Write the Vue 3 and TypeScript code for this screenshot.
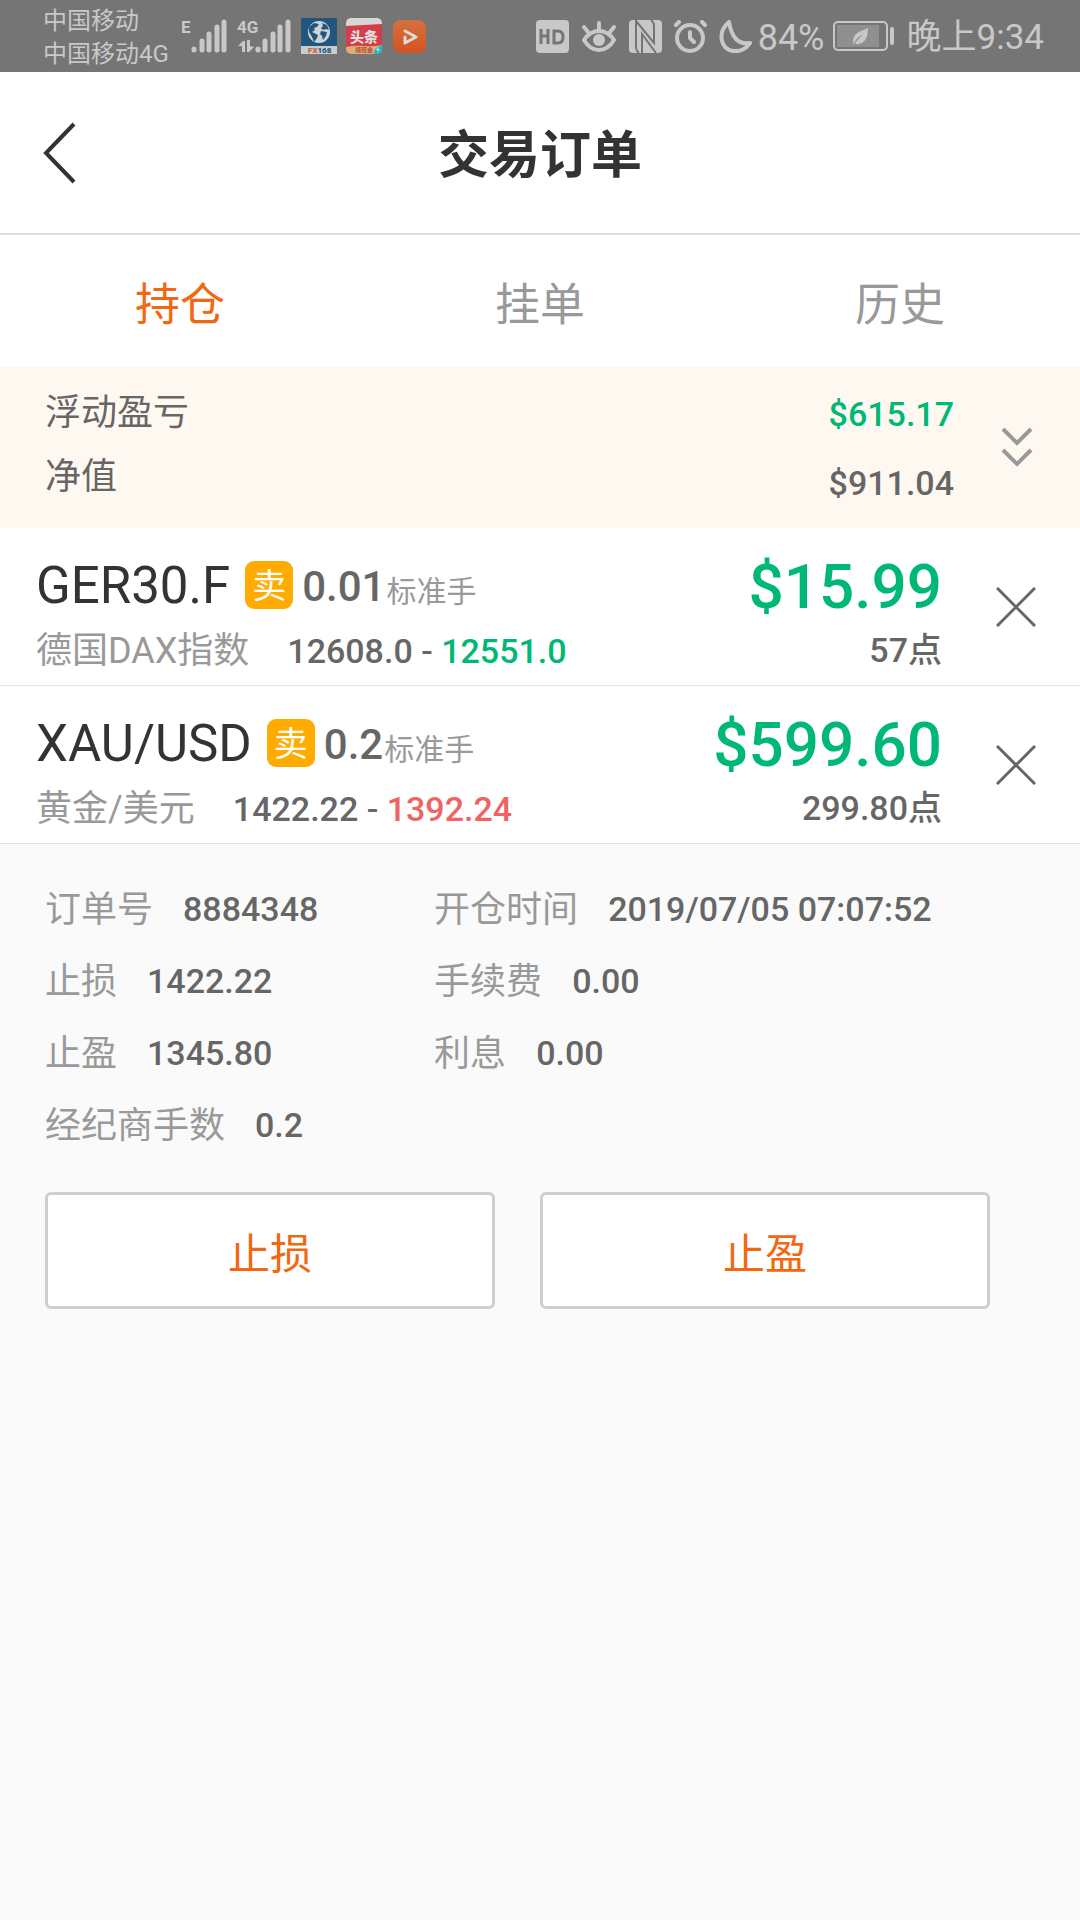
<script setup lang="ts">
import { ref } from 'vue'

interface Order {
  symbol: string
  name: string
  side: string
  lots: string
  open: string
  current: string
  trend: 'up' | 'down'
  profit: string
  points: string
}

interface Field {
  label: string
  value: string
}

const tabs = ['持仓', '挂单', '历史']
const activeTab = ref(0)

const orders: Order[] = [
  { symbol: 'GER30.F', name: '德国DAX指数', side: '卖', lots: '0.01', open: '12608.0', current: '12551.0', trend: 'up', profit: '$15.99', points: '57点' },
  { symbol: 'XAU/USD', name: '黄金/美元', side: '卖', lots: '0.2', open: '1422.22', current: '1392.24', trend: 'down', profit: '$599.60', points: '299.80点' },
]

const fields: Field[] = [
  { label: '订单号', value: '8884348' },
  { label: '开仓时间', value: '2019/07/05 07:07:52' },
  { label: '止损', value: '1422.22' },
  { label: '手续费', value: '0.00' },
  { label: '止盈', value: '1345.80' },
  { label: '利息', value: '0.00' },
  { label: '经纪商手数', value: '0.2' },
]
</script>

<template>
  <div class="screen">
    <div class="status">
      <div class="carriers">
        <span>中国移动</span>
        <span>中国移动4G</span>
      </div>
      <svg class="signal" width="46" height="48" viewBox="0 -6 46 48">
        <text x="0" y="15" class="net">E</text>
        <path d="M13 32v-1M21 32v-9M28 32v-16M36 32v-23M43 32v-28" class="bars" />
      </svg>
      <svg class="signal" width="54" height="48" viewBox="0 -6 54 48">
        <text x="0" y="15" class="net">4G</text>
        <path d="M1 28l5-5h2v11h-3v-6zM10 22h3v6l4 1-5 5h-2z" fill="currentColor" />
        <path d="M21 32v-1M28 32v-9M36 32v-16M43 32v-23M51 32v-28" class="bars" />
      </svg>
      <svg class="app" width="36" height="36" viewBox="0 0 36 36">
        <path d="M0 0h36v28H0z" fill="#21577f" />
        <path d="M0 28h36v8H0z" fill="#c8cccf" />
        <circle cx="18" cy="14" r="11" fill="#cfd3d6" />
        <path d="M8 9l5-4 5 1-2 3-3 1 1 2-3 2 2 1 4 2-1 3-3 4-2-5-3-5zM21 5l5 2 2 5-3-1-3 1-2-2 2-2zM20 13l6 1-1 4-3 4-1-4-2-2z" fill="#21577f" />
        <text x="7" y="35" font-size="8" font-weight="900" fill="#21577f"><tspan fill="#d2622d">FX</tspan>168</text>
      </svg>
      <svg class="app" width="36" height="36" viewBox="0 0 36 36">
        <rect width="36" height="36" rx="5" fill="#d43d49" />
        <path d="M0 8V5a5 5 0 0 1 5-5h26a5 5 0 0 1 5 5v1z" fill="#d6d6d6" />
        <path d="M0 29q9 -2 18 -1t18 -1v4a5 5 0 0 1-5 5H5a5 5 0 0 1-5-5z" fill="#d9b273" />
        <path d="M36 27v4a5 5 0 0 1-5 5h-3q-1-6 8-9z" fill="#24b5c8" />
        <path d="M33 28l-3 4h2l-1 3 3-4h-2z" fill="#ddd" />
        <text x="4" y="24" font-size="14" font-weight="900" fill="#e3dcdc">头条</text>
        <text x="9" y="34" font-size="6" font-weight="700" fill="#bd493d">领现金</text>
      </svg>
      <svg class="app play" width="33" height="33" viewBox="0 0 33 33">
        <defs>
          <linearGradient id="play-bg" x1="0" y1="0" x2="0" y2="1">
            <stop offset="0" stop-color="#d4713f" />
            <stop offset="1" stop-color="#d4541f" />
          </linearGradient>
        </defs>
        <rect width="33" height="33" rx="8" fill="url(#play-bg)" />
        <path d="M12 11l11 6-11 6v-6" fill="none" stroke="#ddd" stroke-width="3" stroke-linejoin="round" stroke-linecap="round" />
      </svg>
      <div class="system">
        <svg width="33" height="33" viewBox="0 0 33 33">
          <rect width="33" height="33" rx="4" fill="currentColor" />
          <path d="M5 9v15M12 9v15M5 16h7M18 11v12h4q5 0 5-6t-5-6z" fill="none" stroke="#757575" stroke-width="3" />
        </svg>
        <svg width="36" height="33" viewBox="0 0 36 33">
          <g fill="none" stroke="currentColor" stroke-width="4" stroke-linecap="round">
            <path d="M3 20q6-9 15-9t15 9q-6 10-15 10T3 20z" />
            <path d="M18 10V3M7 12L3 7M29 12l4-5" />
          </g>
          <circle cx="18" cy="20" r="6" fill="currentColor" />
        </svg>
        <svg width="33" height="33" viewBox="0 0 33 33">
          <rect width="33" height="33" rx="4" fill="currentColor" />
          <path d="M7 0v27q0 4 3 6M7 1l18 22V6q0-4-3-6M13 33V14l14 19" fill="none" stroke="#757575" stroke-width="2" />
        </svg>
        <svg width="33" height="33" viewBox="0 0 33 33">
          <g fill="none" stroke="currentColor" stroke-width="4" stroke-linecap="round" stroke-linejoin="round">
            <circle cx="16" cy="18" r="13" />
            <path d="M16 12v6l4 4M2 5l3-3M31 5l-3-3" />
          </g>
        </svg>
        <svg width="33" height="33" viewBox="0 0 33 33">
          <path d="M10 2C-2 12 1 30 15 31q10 1 16-8Q14 26 10 2z" fill="none" stroke="currentColor" stroke-width="4" stroke-linejoin="round" />
        </svg>
        <span class="percent">84%</span>
        <svg class="battery" width="62" height="30" viewBox="0 0 62 30">
          <rect x="1" y="1" width="53" height="28" rx="4" fill="none" stroke="currentColor" stroke-width="2" />
          <rect x="4" y="4" width="42" height="22" fill="#8f8f8f" />
          <rect x="57" y="6" width="4" height="18" rx="2" fill="currentColor" />
          <path d="M20 24q-1-10 6-13l9-4q0 14-9 16-3 1-4-1l8-9q-8 5-10 11z" fill="currentColor" />
        </svg>
        <span class="clock">晚上9:34</span>
      </div>
    </div>

    <header class="title-bar">
      <button class="back" type="button" aria-label="返回">
        <svg width="34" height="62" viewBox="0 0 34 62">
          <path d="M31 2L3 31l28 29" fill="none" stroke="#333" stroke-width="4" />
        </svg>
      </button>
      <h1>交易订单</h1>
    </header>

    <nav class="tabs">
      <button v-for="(tab, i) in tabs" :key="tab" type="button" :class="{ active: i === activeTab }" @click="activeTab = i">{{ tab }}</button>
    </nav>

    <section class="summary">
      <div class="labels">
        <span>浮动盈亏</span>
        <span>净值</span>
      </div>
      <div class="values">
        <span class="up">$615.17</span>
        <span>$911.04</span>
      </div>
      <button class="action" type="button" aria-label="展开">
        <svg width="34" height="42" viewBox="0 0 34 42">
          <path d="M3 4l14 14L31 4M3 25l14 14 14-14" fill="none" stroke="#999" stroke-width="4" />
        </svg>
      </button>
    </section>

    <article v-for="order in orders" :key="order.symbol" class="order">
      <div class="info">
        <div class="head">
          <span class="symbol">{{ order.symbol }}</span>
          <span class="side">{{ order.side }}</span>
          <span class="lots">{{ order.lots }}</span>
          <span class="unit">标准手</span>
        </div>
        <div class="sub">
          <span class="name">{{ order.name }}</span>
          <span class="prices">{{ order.open }} - <span :class="order.trend">{{ order.current }}</span></span>
        </div>
      </div>
      <div class="result">
        <span class="profit up">{{ order.profit }}</span>
        <span class="points">{{ order.points }}</span>
      </div>
      <button class="action" type="button" aria-label="平仓">
        <svg width="40" height="40" viewBox="0 0 40 40">
          <path d="M1 1l38 38M39 1L1 39" stroke="#666" stroke-width="3" />
        </svg>
      </button>
    </article>

    <section class="detail">
      <dl>
        <div v-for="field in fields" :key="field.label">
          <dt>{{ field.label }}</dt>
          <dd>{{ field.value }}</dd>
        </div>
      </dl>
      <div class="buttons">
        <button type="button">止损</button>
        <button type="button">止盈</button>
      </div>
    </section>
  </div>
</template>

<style>
body {
  background: #fafafa;
}
</style>

<style scoped>
.screen {
  min-height: 100vh;
  background: #fafafa;
  color: #666;
  font-family: Roboto, "Noto Sans CJK SC", sans-serif;
  font-size: 36px;
}

button {
  margin: 0;
  padding: 0;
  border: 0;
  background: none;
  font-family: inherit;
  font-size: inherit;
  color: inherit;
  cursor: pointer;
}

svg {
  display: block;
  flex: none;
}

.up {
  color: #00b876;
}

.down {
  color: #ee6363;
}

/* Phone status bar */
.status {
  display: flex;
  align-items: center;
  height: 72px;
  padding: 0 36px 0 43px;
  background: #757575;
  color: #c8c8c8;
}

.carriers {
  display: flex;
  flex-direction: column;
  width: 138px;
  padding-top: 4px;
  font-size: 24px;
  line-height: 33px;
  white-space: nowrap;
}

.signal {
  margin-right: 10px;
}

.net {
  fill: currentColor;
  font-size: 17px;
  font-weight: 700;
}

.bars {
  fill: none;
  stroke: currentColor;
  stroke-width: 5;
  stroke-linecap: round;
}

.app {
  margin-right: 9px;
}

.play {
  margin-left: 2px;
}

.system {
  display: flex;
  align-items: center;
  gap: 12px;
  margin-left: auto;
  line-height: 42px;
  white-space: nowrap;
}

.percent,
.clock {
  padding-top: 4px;
}

.percent {
  margin-left: -6px;
}

.clock {
  font-size: 35px;
}

.battery {
  margin-left: -4px;
}

/* Title and tabs */
.title-bar {
  display: grid;
  grid-template-columns: 120px 1fr 120px;
  align-items: center;
  height: 161px;
  border-bottom: 2px solid #dcdce0;
  background: #fff;
}

.back {
  padding-left: 43px;
}

h1 {
  margin: 0;
  padding-top: 6px;
  color: #333;
  font-size: 51px;
  font-weight: 700;
  line-height: 72px;
  text-align: center;
}

.tabs {
  display: flex;
  height: 132px;
  background: #fff;
}

.tabs button {
  flex: 1;
  color: #999;
  font-size: 45px;
}

.tabs .active {
  color: #f26711;
}

/* Account summary */
.summary {
  display: flex;
  align-items: center;
  height: 161px;
  padding-left: 45px;
  background: #fff8f1;
}

.labels,
.values {
  display: flex;
  flex-direction: column;
}

.labels {
  flex: 1;
  padding-bottom: 6px;
  line-height: 64px;
}

.values {
  padding-top: 3px;
  font-size: 34px;
  font-weight: 500;
  line-height: 69px;
}

.action {
  display: flex;
  align-items: center;
  justify-content: center;
  align-self: stretch;
  width: 126px;
}

.summary .action {
  padding-bottom: 4px;
}

/* Order rows */
.order {
  display: flex;
  height: 157px;
  padding-left: 36px;
  border-bottom: 1px solid #e2e2e2;
  background: #fff;
}

.info {
  flex: 1;
  padding-top: 25px;
}

.head,
.sub {
  display: flex;
  white-space: nowrap;
}

.head {
  height: 66px;
  line-height: 66px;
}

.sub {
  gap: 38px;
  line-height: 64px;
}

.symbol {
  color: #333;
  font-size: 51px;
}

.side {
  align-self: center;
  width: 48px;
  height: 48px;
  margin: 0 9px 2px 15px;
  border-radius: 9px;
  background: #ffab00;
  color: #fff;
  font-size: 34px;
  line-height: 50px;
  text-align: center;
}

.lots {
  font-size: 42px;
  font-weight: 500;
  line-height: 68px;
}

.unit {
  padding-left: 1px;
  color: #999;
  font-size: 30px;
  line-height: 78px;
}

.name {
  color: #999;
}

.prices,
.points {
  font-size: 34px;
  font-weight: 500;
}

.result {
  display: flex;
  flex-direction: column;
  align-items: flex-end;
  padding: 26px 9px 0 0;
}

.profit {
  font-size: 62px;
  font-weight: 500;
  line-height: 66px;
}

.points {
  line-height: 60px;
}

.result + .action {
  width: 129px;
}

/* Expanded order */
.detail {
  padding: 29px 90px 45px 45px;
}

dl {
  display: grid;
  grid-template-columns: 7fr 10fr;
  margin: 0 0 31px;
}

dl div {
  display: flex;
  gap: 30px;
  height: 72px;
  line-height: 72px;
  white-space: nowrap;
}

dt {
  color: #999;
  line-height: 75px;
}

dd {
  margin: 0;
  font-size: 34px;
  font-weight: 500;
}

.buttons {
  display: flex;
  gap: 45px;
}

.buttons button {
  flex: 1;
  height: 117px;
  border: 3px solid #ccced3;
  border-radius: 6px;
  background: #fff;
  color: #f26711;
  font-size: 42px;
}
</style>
